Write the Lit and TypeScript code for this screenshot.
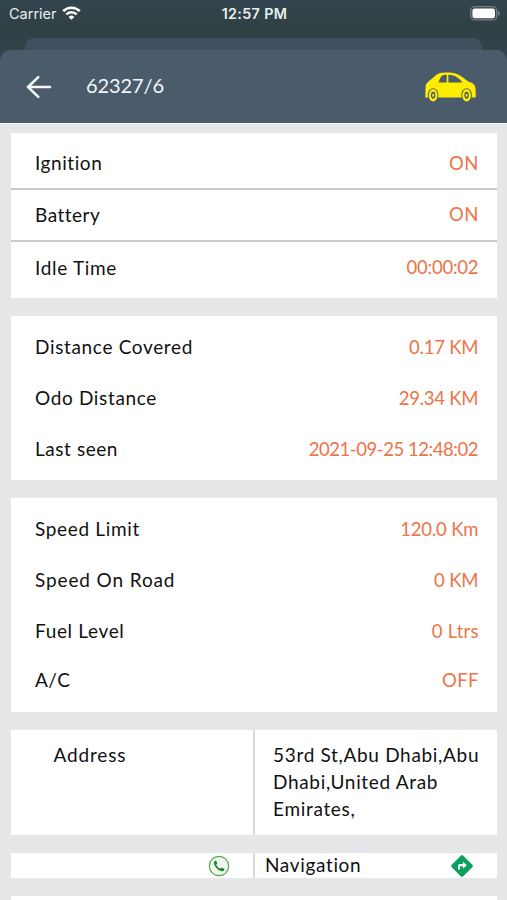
import { LitElement, html, css, svg } from "lit";
import { customElement, property } from "lit/decorators.js";

interface Row {
  label: string;
  value: string;
  /** letter spacing in px for the label and for the value */
  ls: number;
  vs: number;
}

const ENGINE: Row[] = [
  { label: "Ignition", value: "ON", ls: 0.57, vs: 0.5 },
  { label: "Battery", value: "ON", ls: 0.5, vs: 0.5 },
  { label: "Idle Time", value: "00:00:02", ls: 0.68, vs: -0.25 },
];
const DISTANCE: Row[] = [
  { label: "Distance Covered", value: "0.17 KM", ls: 0.66, vs: -0.2 },
  { label: "Odo Distance", value: "29.34 KM", ls: 0.65, vs: -0.25 },
  { label: "Last seen", value: "2021-09-25 12:48:02", ls: 0.56, vs: -0.45 },
];
const SPEED: Row[] = [
  { label: "Speed Limit", value: "120.0 Km", ls: 0.66, vs: -0.18 },
  { label: "Speed On Road", value: "0 KM", ls: 0.88, vs: -0.1 },
  { label: "Fuel Level", value: "0 Ltrs", ls: 0.65, vs: 0.25 },
  { label: "A/C", value: "OFF", ls: 0.5, vs: 0.4 },
];

@customElement("status-bar")
export class StatusBar extends LitElement {
  static styles = css`
    :host {
      display: grid;
      grid-template-columns: 1fr auto 1fr;
      align-items: center;
      height: 27px;
      padding: 0 7px 0 9px;
      box-sizing: border-box;
      color: #e9eef0;
      font: 14.5px Inter, sans-serif;
    }
    .carrier { display: flex; align-items: center; gap: 5px; }
    .time { font-weight: 600; font-size: 14.3px; letter-spacing: 0.35px; }
    .battery { justify-self: end; }
    svg { display: block; margin-bottom: 1px; }
  `;
  render() {
    return html`
      <div class="carrier">
        <span>Carrier</span>
        <svg width="19" height="14" viewBox="0 0 19 14" fill="none" stroke="#fff" stroke-width="2.6">
          <path d="M1.2 5.2a11.8 11.8 0 0 1 16.6 0" />
          <path d="M4.3 8.4a7.4 7.4 0 0 1 10.4 0" />
          <path d="M9.5 13.8 6.6 10.9a4.1 4.1 0 0 1 5.8 0z" fill="#fff" stroke="none" />
        </svg>
      </div>
      <div class="time">12:57 PM</div>
      <svg class="battery" width="30" height="15" viewBox="0 0 30 15">
        <rect x=".7" y=".7" width="26" height="13.2" rx="4" fill="none" stroke="#748085" stroke-width="1.3" />
        <rect x="2.4" y="2.5" width="22.6" height="9.7" rx="2.2" fill="#fff" />
        <path d="M28 5v4.8c1.1-.3 1.7-1.2 1.7-2.4S29.1 5.3 28 5z" fill="#748085" />
      </svg>
    `;
  }
}

@customElement("detail-row")
export class DetailRow extends LitElement {
  static styles = css`
    :host {
      display: flex;
      justify-content: space-between;
      align-items: center;
      padding: 0 18.5px 0 24.5px;
      white-space: nowrap;
    }
    .label { color: #111; }
    .value { color: #ee7347; font-size: 18.5px; padding-top: var(--value-drop, 2px); }
  `;
  @property({ attribute: false }) row!: Row;
  render() {
    const { label, value, ls, vs } = this.row;
    return html`
      <span class="label" style="letter-spacing:${ls}px">${label}</span>
      <span class="value" style="letter-spacing:${vs}px;margin-right:${-vs}px">${value}</span>
    `;
  }
}

const wheel = (cx: number) => svg`
  <ellipse cx=${cx} cy="23.4" rx="5.3" ry="7.2" fill="#4a5b6c"/>
  <ellipse cx=${cx} cy="23.4" rx="4.4" ry="6.3" fill="#ffed00"/>
  <ellipse cx=${cx} cy="23.4" rx="2.2" ry="3.5" fill="#4a5b6c"/>
  <ellipse cx=${cx} cy="23.4" rx=".9" ry="1.8" fill="#ffed00"/>
`;

const car = svg`
  <path fill-rule="evenodd" fill="#ffed00" d="M.3 25.5.6 14.5C.7 12.5 1.5 11.2 3 10L11 3.2C13.5 1 16.5.3 22 .3c7.5 0 10.5 1 15 4.200l7 5.300c4.500.8 6.800 3.400 7.100 7.200l.2 8.500zM13.600 10.500h8.300V2.600c-4.300 0-5.600 1.200-6.800 4zM23.600 2.600v7.900H38C34.700 6 29.500 2.600 23.600 2.600z"/>
  ${wheel(8.2)}
  ${wheel(42)}
`;

@customElement("app-root")
export class AppRoot extends LitElement {
  static styles = css`
    :host {
      display: flex;
      flex-direction: column;
      height: 900px;
      overflow: hidden;
      background: #e5e7e9;
      font: 19px/27px Lato, sans-serif;
      color: #111;
    }
    .top { background: linear-gradient(#33454e, #2f4145 28px, #33444c 60px); flex: none; }
    .back-sheet { height: 12px; margin: 11px 25px 0; border-radius: 9px 9px 0 0; background: #40505e; }
    .header {
      display: flex;
      align-items: center;
      height: 73px;
      padding: 0 31px 0 26px;
      box-sizing: border-box;
      border-radius: 11px 11px 0 0;
      background: #4a5b6c;
      color: #f4f7fa;
    }
    .title { margin: 0 0 2px 34px; flex: 1; font-size: 20px; letter-spacing: -0.1px; }
    .header svg { display: block; }
    .content { display: flex; flex-direction: column; gap: 18px; padding: 9px 10px 0 10.5px; border-top: 1px solid #f4f5f8; }
    .card { background: #fff; display: grid; }
    .engine { grid-template-rows: 55px 2px 50px 2px 56px; height: 165px; }
    .engine detail-row { padding-top: 4px; }
    .engine .line + detail-row { padding-top: 0; padding-bottom: 2px; --value-drop: 0px; }
    .engine .line + detail-row:last-child { padding-bottom: 6px; }
    .line { background: #c9cacc; }
    .distance { grid-auto-rows: 51px; height: 164px; box-sizing: border-box; padding-top: 5px; }
    .speed { grid-template-rows: 51px 51px 51px 46px; height: 214px; box-sizing: border-box; padding-top: 5px; }
    .split { display: grid; grid-template-columns: 242.5px 1fr; column-gap: 2px; background: #d8dadc; }
    .split > div { background: #fff; }
    .address { height: 105px; }
    .address > div { padding: 11px 12px 0 18px; line-height: 27px; letter-spacing: 0.68px; white-space: nowrap; }
    .address .name { padding-left: 43px; letter-spacing: 0.85px; }
    .actions { height: 25px; }
    .actions > div { display: flex; align-items: center; justify-content: space-between; height: 25px; padding: 0 23px 0 10px; letter-spacing: 0.65px; }
    .actions span { line-height: 23px; padding-bottom: 2px; }
    .actions .call { justify-content: flex-end; }
    .next { height: 20px; }
  `;

  private rows(rows: Row[]) {
    return rows.map((row) => html`<detail-row .row=${row}></detail-row>`);
  }

  render() {
    return html`
      <div class="top">
        <status-bar></status-bar>
        <div class="back-sheet"></div>
        <div class="header">
          <svg width="26" height="24" viewBox="0 0 26 24" fill="none" stroke="#f8fafc" stroke-width="2.5" stroke-linecap="round" stroke-linejoin="round">
            <path d="M24 12H2M12.3 2.2 2 12l10.300 9.800" />
          </svg>
          <div class="title">62327/6</div>
          <svg width="51" height="30" viewBox="0 0 51.5 30">${car}</svg>
        </div>
      </div>
      <div class="content">
        <div class="card engine">
          <detail-row .row=${ENGINE[0]}></detail-row>
          <div class="line"></div>
          <detail-row .row=${ENGINE[1]}></detail-row>
          <div class="line"></div>
          <detail-row .row=${ENGINE[2]}></detail-row>
        </div>
        <div class="card distance">${this.rows(DISTANCE)}</div>
        <div class="card speed">${this.rows(SPEED)}</div>
        <div class="split address">
          <div class="name">Address</div>
          <div>53rd St,Abu Dhabi,Abu<br />Dhabi,United Arab<br />Emirates,</div>
        </div>
        <div class="split actions">
          <div class="call">
            <svg width="22" height="22" viewBox="0 0 22 22">
              <circle cx="11" cy="11" r="9.7" fill="#eef5f0" stroke="#5aa84a" stroke-width="1.2" />
              <path fill="#1c8526" d="M6.200 6.600c.7-1 1.600-1.200 2.100-.7l.9 2.300c.1.600-.8 1.100-.9 1.500.5 1.700 2 3.200 3.800 3.900.6 0 1-.9 1.600-.9l2.400 1.100c.6.5.3 1.500-.7 2.100-1.400.8-3.900.1-6.300-2.100S5.400 8.200 6.200 6.600z" />
            </svg>
          </div>
          <div>
            <span>Navigation</span>
            <svg width="24" height="24" viewBox="0 0 24 24">
              <path fill="#0aa05c" d="M11 1.500q1-.9 2 0l9.500 9.500q.9 1 0 2L13 22.500q-1 .9-2 0L1.500 13q-.9-1 0-2z" />
              <path fill="#fff" d="M8 15.500v-4q0-1.500 1.500-1.500H13V7.700l3.800 3.600L13 14.800v-2.500h-3v3.200z" />
            </svg>
          </div>
        </div>
        <div class="card next"></div>
      </div>
    `;
  }
}
